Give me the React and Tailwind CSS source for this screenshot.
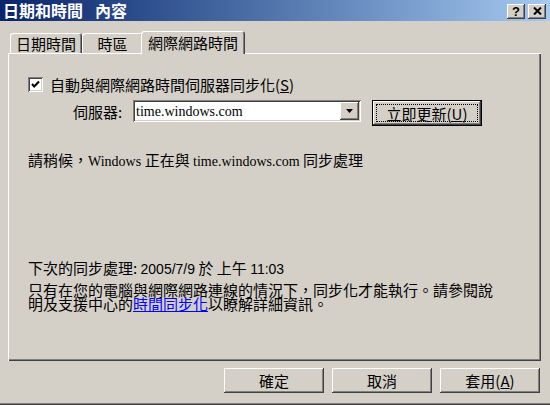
import React from "react";

const raised =
  "shadow-[inset_-1px_-1px_0_#404040,inset_1px_1px_0_#ffffff,inset_-2px_-2px_0_#808080,inset_2px_2px_0_#d4d0c8]";
const sunken =
  "shadow-[inset_1px_1px_0_#808080,inset_-1px_-1px_0_#ffffff,inset_2px_2px_0_#404040,inset_-2px_-2px_0_#d4d0c8]";

function Tab({ children, w, selected }) {
  if (selected) {
    return (
      <div
        className={`relative z-10 -ml-[2px] -mb-px h-[23px] ${w} flex items-center justify-center pb-[1px] rounded-t-[3px] bg-[#d4d0c8] shadow-[inset_1px_1px_0_#ffffff,inset_-1px_0_0_#404040,inset_-2px_0_0_#808080]`}
      >
        {children}
      </div>
    );
  }
  return (
    <div
      className={`h-[20px] ${w} flex items-center justify-center rounded-t-[3px] bg-[#d4d0c8] shadow-[inset_1px_1px_0_#ffffff,inset_-1px_0_0_#404040,inset_-2px_0_0_#808080]`}
    >
      {children}
    </div>
  );
}

function Btn({ children }) {
  return (
    <div className={`w-[100px] h-[25px] flex items-center justify-center bg-[#d4d0c8] leading-none ${raised}`}>
      {children}
    </div>
  );
}

export default function App() {
  return (
    <div className="w-[550px] h-[405px] bg-[#d4d0c8] flex flex-col overflow-hidden text-black text-[15px] font-['Noto_Sans_CJK_TC',sans-serif] shadow-[inset_0_-1px_0_#404040,inset_0_-2px_0_#808080]">
      {/* Title bar */}
      <div className="h-[21px] shrink-0 flex items-center justify-between bg-linear-to-r from-[#0a246a] to-[#a6caf0] pl-[3px] pr-[4px]">
        <span className="text-white font-bold text-[16px] leading-[21px] whitespace-nowrap">
          日期和時間<span className="inline-block w-[12px]"></span>內容
        </span>
        <div className="flex gap-[3px] mt-[2px]">
          <div className={`w-[18px] h-[15px] flex items-center justify-center bg-[#d4d0c8] ${raised}`}>
            <span className="font-['Liberation_Sans',sans-serif] font-bold text-[13px] leading-none mt-[-1px]">?</span>
          </div>
          <div className={`w-[18px] h-[15px] flex items-center justify-center bg-[#d4d0c8] ${raised}`}>
            <svg width="9" height="8" viewBox="0 0 9 8" className="mt-[-1px]">
              <path d="M1 0.5 L8 7.5 M8 0.5 L1 7.5" stroke="#000" strokeWidth="2" fill="none" />
            </svg>
          </div>
        </div>
      </div>

      {/* Tabs */}
      <div className="mt-[10px] ml-[10px] h-[22px] shrink-0 flex items-end relative z-10 leading-none">
        <Tab w="w-[72px]">日期時間</Tab>
        <Tab w="w-[61px]">時區</Tab>
        <Tab w="w-[104px]" selected>
          網際網路時間
        </Tab>
      </div>

      {/* Panel */}
      <div className="ml-[8px] w-[533px] h-[308px] shrink-0 flex flex-col pl-[20px] shadow-[inset_1px_1px_0_#ffffff,inset_-1px_-1px_0_#404040,inset_-2px_-2px_0_#808080]">
        {/* checkbox row */}
        <div className="mt-[24px] h-[15px] flex items-center">
          <div className={`w-[15px] h-[15px] bg-white flex items-center justify-center ${sunken}`}>
            <svg width="15" height="15" viewBox="0 0 15 15">
              <path d="M4 7 L6.2 9.5 L11 4.5" stroke="#000" strokeWidth="2" fill="none" />
            </svg>
          </div>
          <span className="ml-[7px] leading-[15px] whitespace-nowrap">
            自動與網際網路時間伺服器同步化(<span className="underline">S</span>)
          </span>
        </div>

        {/* server row */}
        <div className="mt-[8px] flex items-start">
          <span className="ml-[45px] w-[60px] leading-[24px] whitespace-nowrap">伺服器:</span>
          <div className={`w-[228px] h-[22px] bg-white p-[2px] flex ${sunken}`}>
            <span className="flex-1 pl-[1px] font-['Liberation_Serif',serif] text-[14px] leading-[19px] whitespace-nowrap">
              time.windows.com
            </span>
            <div className={`w-[19px] h-[18px] bg-[#d4d0c8] flex items-center justify-center ${raised}`}>
              <svg width="7" height="4" viewBox="0 0 7 4">
                <polygon points="0,0 7,0 3.5,4" fill="#000" />
              </svg>
            </div>
          </div>
          <div className={`ml-[11px] w-[110px] h-[26px] border border-black bg-[#d4d0c8] flex ${raised}`}>
            <div className="flex-1 m-[3px] border border-dotted border-black flex items-center justify-center leading-none whitespace-nowrap">
              立即更新(<span className="underline">U</span>)
            </div>
          </div>
        </div>

        {/* status */}
        <div className="mt-[26px] leading-[15px] whitespace-nowrap">
          請稍候，<span className="font-['Liberation_Serif',serif] text-[14px]">Windows </span>正在與{" "}
          <span className="font-['Liberation_Serif',serif] text-[14px]">time.windows.com </span>同步處理
        </div>

        {/* next sync */}
        <div className="mt-[91px] leading-[15px] whitespace-nowrap">
          下次的同步處理:{" "}
          <span className="font-['Liberation_Sans',sans-serif] text-[14px]">2005/7/9</span> 於 上午{" "}
          <span className="font-['Liberation_Sans',sans-serif] text-[14px]">11:03</span>
        </div>

        <div className="mt-[6px] leading-[14px] whitespace-nowrap">
          只有在您的電腦與網際網路連線的情況下，同步化才能執行。請參閱說
          <br />
          明及支援中心的<span className="text-[#0000ff] underline">時間同步化</span>以瞭解詳細資訊。
        </div>
      </div>

      {/* Bottom buttons */}
      <div className="mt-[7px] flex justify-end gap-[8px] pr-[10px]">
        <Btn>確定</Btn>
        <Btn>取消</Btn>
        <Btn>
          <span>
            套用(<span className="underline">A</span>)
          </span>
        </Btn>
      </div>
    </div>
  );
}
